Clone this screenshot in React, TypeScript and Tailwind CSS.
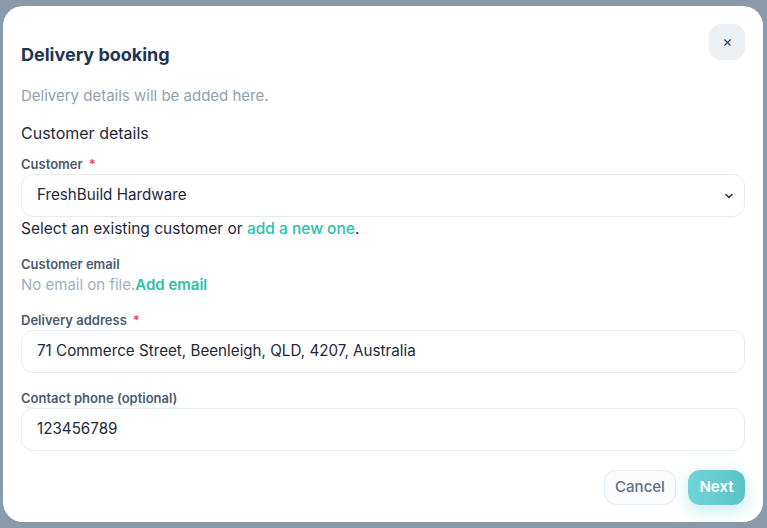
import { ChevronDown, X } from 'lucide-react'

const font = { fontFamily: 'Inter, "Noto Sans", sans-serif' }

function Label({ text, required }: { text: string; required?: boolean }) {
  return (
    <div className="h-[18px] text-[13px] leading-[18px] font-semibold text-[#4a5b70]">
      {text}
      {required && <span className="ml-1.5 text-[#e5484d]">*</span>}
    </div>
  )
}

function Field({ value, select }: { value: string; select?: boolean }) {
  return (
    <div className="flex h-[43px] items-center justify-between rounded-xl border border-[#e3ebf1] bg-white pl-[15px] pr-[9px] text-[15.2px] text-[#1e293b]">
      <span>{value}</span>
      {select && <ChevronDown className="h-3 w-3 text-[#1e3552]" strokeWidth={3} />}
    </div>
  )
}

export default function App() {
  return (
    <div className="h-[528px] w-[767px] overflow-hidden bg-[#8b9aab] pt-[6px] pl-[3px]" style={font}>
      <div className="relative h-[516px] w-[760px] rounded-[20px] bg-white px-[18px] pt-[35px]">
        {/* close */}
        <button className="absolute top-[18px] right-[18px] flex h-9 w-9 items-center justify-center rounded-xl bg-[#eceff3] text-[#2a4565]">
          <X className="h-[11px] w-[11px]" strokeWidth={2.5} />
        </button>

        <h2 className="text-[18px] leading-[28px] font-bold text-[#1e3552]">Delivery booking</h2>
        <p className="mt-4 text-[15px] leading-[22px] text-[#8ea1b4]">Delivery details will be added here.</p>
        <h3 className="mt-[14px] text-[16px] leading-[24px] text-[#1e293b]">Customer details</h3>

        <div className="mt-[10px]">
          <Label text="Customer" required />
        </div>
        <div className="mt-px">
          <Field value="FreshBuild Hardware" select />
        </div>
        <p className="mt-px text-[15.5px] leading-[22px] text-[#1e293b]">
          Select an existing customer or <span className="font-medium text-[#2dbfa9]">add a new one</span>.
        </p>

        <div className="mt-[15px]">
          <Label text="Customer email" />
        </div>
        <p className="mt-[2px] text-[15px] leading-[20px] text-[#9eafbf]">
          No email on file.<span className="font-semibold text-[#2dbfa9]">Add email</span>
        </p>

        <div className="mt-4">
          <Label text="Delivery address" required />
        </div>
        <div className="mt-px">
          <Field value="71 Commerce Street, Beenleigh, QLD, 4207, Australia" />
        </div>

        <div className="mt-4">
          <Label text="Contact phone (optional)" />
        </div>
        <div className="mt-px">
          <Field value="123456789" />
        </div>

        <div className="mt-[19px] flex justify-end gap-3">
          <button className="h-[35px] w-[72px] rounded-xl border border-[#e4ebf1] bg-[#fbfcfd] text-[15px] font-medium text-[#5f6f84]">
            Cancel
          </button>
          <button className="h-[35px] w-[57px] rounded-xl bg-gradient-to-r from-[#72d4d7] to-[#5bc3c8] text-[15px] font-semibold text-white shadow-[0_6px_18px_rgba(94,199,204,0.35)]">
            Next
          </button>
        </div>
      </div>
    </div>
  )
}
